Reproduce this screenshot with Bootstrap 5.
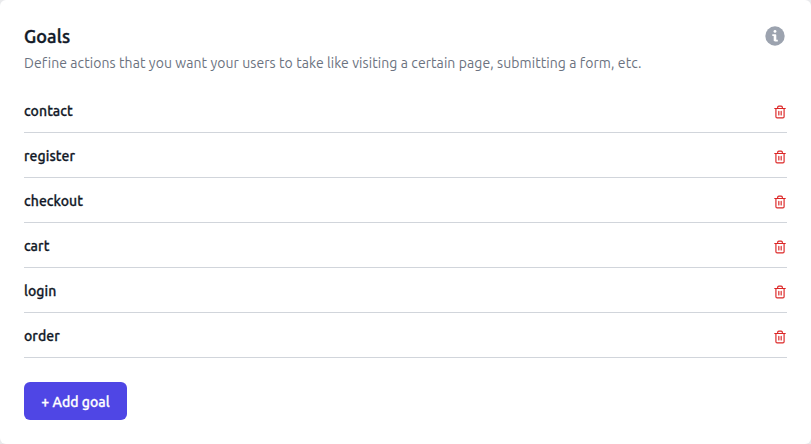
<!DOCTYPE html>
<html lang="en">
<head>
<meta charset="utf-8">
<meta name="viewport" content="width=device-width, initial-scale=1">
<title>Goals</title>
<link href="https://cdn.jsdelivr.net/npm/bootstrap@5.3.0/dist/css/bootstrap.min.css" rel="stylesheet">
<style>
body{background:#e9eaec;font-family:Ubuntu,"Noto Sans",sans-serif;color:#111827}
.panel{height:444px;border-radius:6px;padding:24px}
.panel-title{font-size:18px;line-height:24px;font-weight:500;letter-spacing:.15px;-webkit-text-stroke:.45px currentColor}
.panel-desc{font-size:14px;line-height:20px;color:#6b7280;margin-top:5px;letter-spacing:.078px}
.goal-list{margin-top:15px}
.goal{height:45px;padding-top:2px;border-bottom:1px solid #d1d5db;font-size:14px;line-height:20px;font-weight:500;letter-spacing:.08px}
.goal span,.btn-goal{-webkit-text-stroke:.28px currentColor}
.info{color:#9ca3af;width:20px;height:20px;margin:2px 2px 0 0}
.trash{width:14px;height:14px;margin-top:2px;color:#dc2626}
.btn-goal{--bs-btn-bg:#4f46e5;--bs-btn-color:#fff;--bs-btn-hover-bg:#4338ca;--bs-btn-hover-color:#fff;width:103px;height:38px;margin-top:24px;padding:2px 0 0;border:0;border-radius:6px;font-size:14px;line-height:20px;font-weight:500;letter-spacing:.05px}
</style>
</head>
<body>
<svg class="d-none"><symbol id="bin" viewBox="0 0 24 24" fill="none" stroke="currentColor" stroke-width="2" stroke-linecap="round" stroke-linejoin="round"><path d="M3 6h18M19 6v14a2 2 0 0 1-2 2H7a2 2 0 0 1-2-2V6m3 0V4a2 2 0 0 1 2-2h4a2 2 0 0 1 2 2v2M10 11v6M14 11v6"/></symbol></svg>
<main class="panel bg-white">
<header class="d-flex justify-content-between align-items-start">
<div><h2 class="panel-title mb-0">Goals</h2>
<p class="panel-desc mb-0">Define actions that you want your users to take like visiting a certain page, submitting a form, etc.</p></div>
<svg class="info" viewBox="0 0 20 20"><circle cx="10" cy="10" r="9.7" fill="currentColor"/><circle cx="10" cy="5.4" r="1.45" fill="#fff"/><path d="M7.3 8.3h3.1c.6 0 .9.3.9.9v4.6h1.5v1.6H9.9c-.8 0-1.2-.4-1.2-1.2v-4.3H7.3z" fill="#fff"/></svg>
</header>
<ul class="goal-list list-unstyled mb-0">
<li class="goal d-flex justify-content-between align-items-center"><span>contact</span><svg class="trash"><use href="#bin"/></svg></li>
<li class="goal d-flex justify-content-between align-items-center"><span>register</span><svg class="trash"><use href="#bin"/></svg></li>
<li class="goal d-flex justify-content-between align-items-center"><span>checkout</span><svg class="trash"><use href="#bin"/></svg></li>
<li class="goal d-flex justify-content-between align-items-center"><span>cart</span><svg class="trash"><use href="#bin"/></svg></li>
<li class="goal d-flex justify-content-between align-items-center"><span>login</span><svg class="trash"><use href="#bin"/></svg></li>
<li class="goal d-flex justify-content-between align-items-center"><span>order</span><svg class="trash"><use href="#bin"/></svg></li>
</ul>
<button type="button" class="btn btn-goal">+ Add goal</button>
</main>
</body>
</html>
